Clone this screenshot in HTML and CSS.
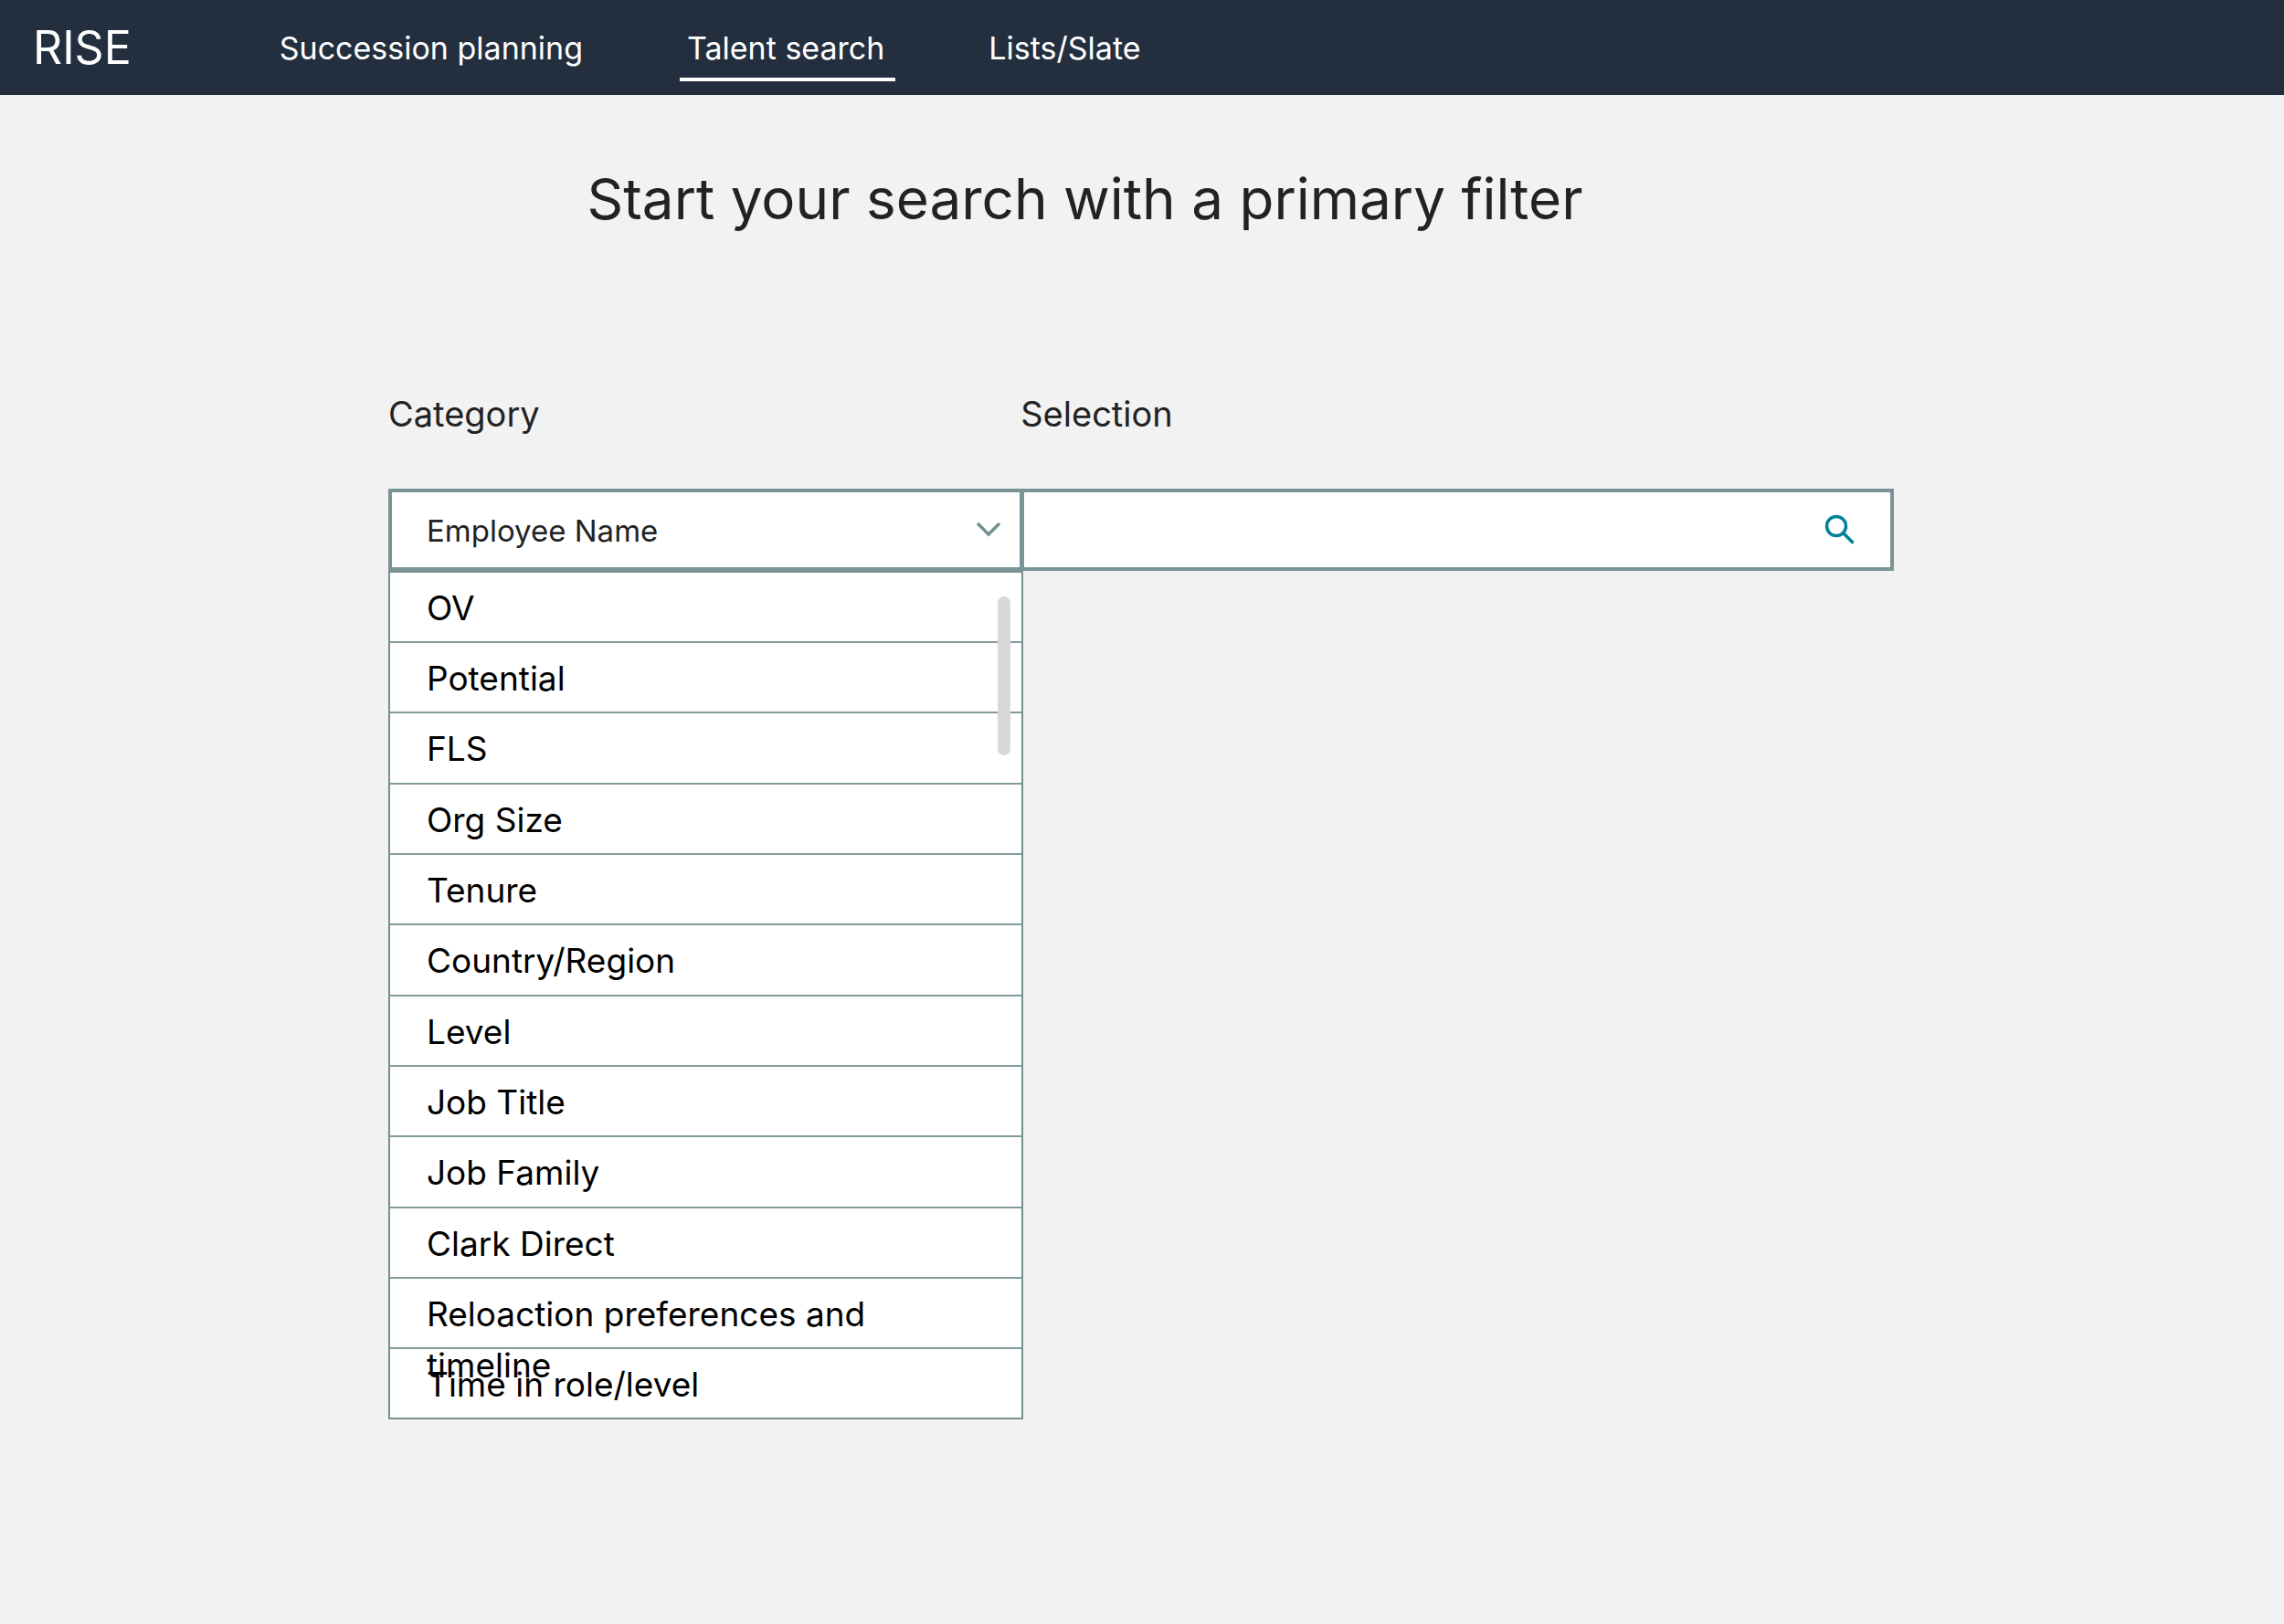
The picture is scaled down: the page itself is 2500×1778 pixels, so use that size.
FILE: index.html
```html
<!DOCTYPE html>
<html lang="en">
<head>
    <meta charset="UTF-8">
    <meta name="viewport" content="width=device-width, initial-scale=1.0">
    <title>RISE - Talent search</title>
    <link rel="stylesheet" href="styles.css">
</head>
<body>
    <header class="header">
        <a class="logo" href="#">RISE</a>
        <nav class="nav">
            <a href="#">Succession planning</a>
            <a href="#" class="active">Talent search</a>
            <a href="#">Lists/Slate</a>
        </nav>
    </header>

    <main>
        <h1>Start your search with a primary filter</h1>

        <form class="search">
            <div class="category">
                <label for="category">Category</label>
                <div class="field">
                    <select id="category">
                        <option>Employee Name</option>
                    </select>
                    <svg class="chevron" viewBox="0 0 26 16" aria-hidden="true">
                        <path d="M2 2 L13 13 L24 2" />
                    </svg>
                </div>
                <div class="dropdown">
                    <ul>
                        <li><button type="button">OV</button></li>
                        <li><button type="button">Potential</button></li>
                        <li><button type="button">FLS</button></li>
                        <li><button type="button">Org Size</button></li>
                        <li><button type="button">Tenure</button></li>
                        <li><button type="button">Country/Region</button></li>
                        <li><button type="button">Level</button></li>
                        <li><button type="button">Job Title</button></li>
                        <li><button type="button">Job Family</button></li>
                        <li><button type="button">Clark Direct</button></li>
                        <li><button type="button">Reloaction preferences and timeline</button></li>
                        <li><button type="button">Time in role/level</button></li>
                    </ul>
                    <div class="scroll-thumb"></div>
                </div>
            </div>

            <div class="selection">
                <label for="selection">Selection</label>
                <div class="field">
                    <input type="text" id="selection">
                    <button type="submit" class="search-button" aria-label="Search">
                        <svg viewBox="0 0 34 34" aria-hidden="true">
                            <circle cx="13" cy="13" r="10.5" />
                            <path d="M21 21 L30.5 30.5" />
                        </svg>
                    </button>
                </div>
            </div>
        </form>
    </main>
</body>
</html>
```
FILE: styles.css
```css
* {
    box-sizing: border-box;
}

body {
    font-family: Inter, "Liberation Sans", sans-serif;
    background-color: #f2f2f2;
    color: #222;
    margin: 0;
}

.header {
    background-color: #232f3f;
    height: 104px;
    padding: 0 36px;
    display: flex;
    align-items: center;
    gap: 154px;
}

.logo {
    color: #fff;
    font-size: 50px;
    text-decoration: none;
}

.nav {
    display: flex;
    gap: 94px;
}

.nav a {
    color: #fff;
    font-size: 34px;
    line-height: 64px;
    margin-top: 6px;
    padding: 0 12px 0 8px;
    border-bottom: 4px solid transparent;
    text-decoration: none;
}

.nav .active {
    border-bottom-color: #fff;
}

h1 {
    font-size: 62px;
    font-weight: normal;
    line-height: 80px;
    text-align: center;
    margin: 74px 5% 0 0;
}

.search {
    display: flex;
    align-items: flex-start;
    margin: 165px 17.1% 0 17%;
}

.category {
    width: 42.2%;
}

/* the two fields share a border */
.selection {
    flex: 1;
    margin-left: -3px;
}

label {
    display: block;
    font-size: 38px;
    line-height: 60px;
    margin-bottom: 52px;
}

.field {
    position: relative;
    display: flex;
    align-items: center;
    height: 90px;
    background-color: #fff;
    border: 4px solid #7a9495;
}

select,
input {
    appearance: none;
    width: 100%;
    height: 100%;
    border: none;
    background: none;
    color: #222;
    font: inherit;
    font-size: 33px;
    padding: 2px 38px 0;
}

.chevron {
    position: absolute;
    right: 21px;
    width: 26px;
    height: 16px;
    pointer-events: none;
}

.chevron path {
    fill: none;
    stroke: #769092;
    stroke-width: 3.5;
    stroke-linecap: round;
}

.search-button {
    background: none;
    border: none;
    margin-right: 38px;
    padding: 0;
    cursor: pointer;
}

.search-button svg {
    display: block;
    width: 34px;
    height: 34px;
    fill: none;
    stroke: #008296;
    stroke-width: 3.5;
    stroke-linecap: round;
}

.dropdown {
    position: relative;
    background-color: #fff;
    border: 2px solid #769092;
}

ul {
    list-style: none;
    margin: 0;
    padding: 0;
}

li {
    height: 77px;
    border-bottom: 2px solid #849b9d;
}

li:nth-child(3n) {
    height: 78px;
}

li:last-child {
    height: 75px;
    border-bottom: none;
}

li button {
    display: block;
    width: 100%;
    background: none;
    border: none;
    color: #000;
    font: inherit;
    font-size: 37px;
    line-height: 56px;
    text-align: left;
    padding: 11px 120px 0 40px;
    cursor: pointer;
}

.scroll-thumb {
    position: absolute;
    top: 26px;
    right: 12px;
    width: 14px;
    height: 174px;
    background-color: #d8d8d8;
    border-radius: 7px;
}
```
